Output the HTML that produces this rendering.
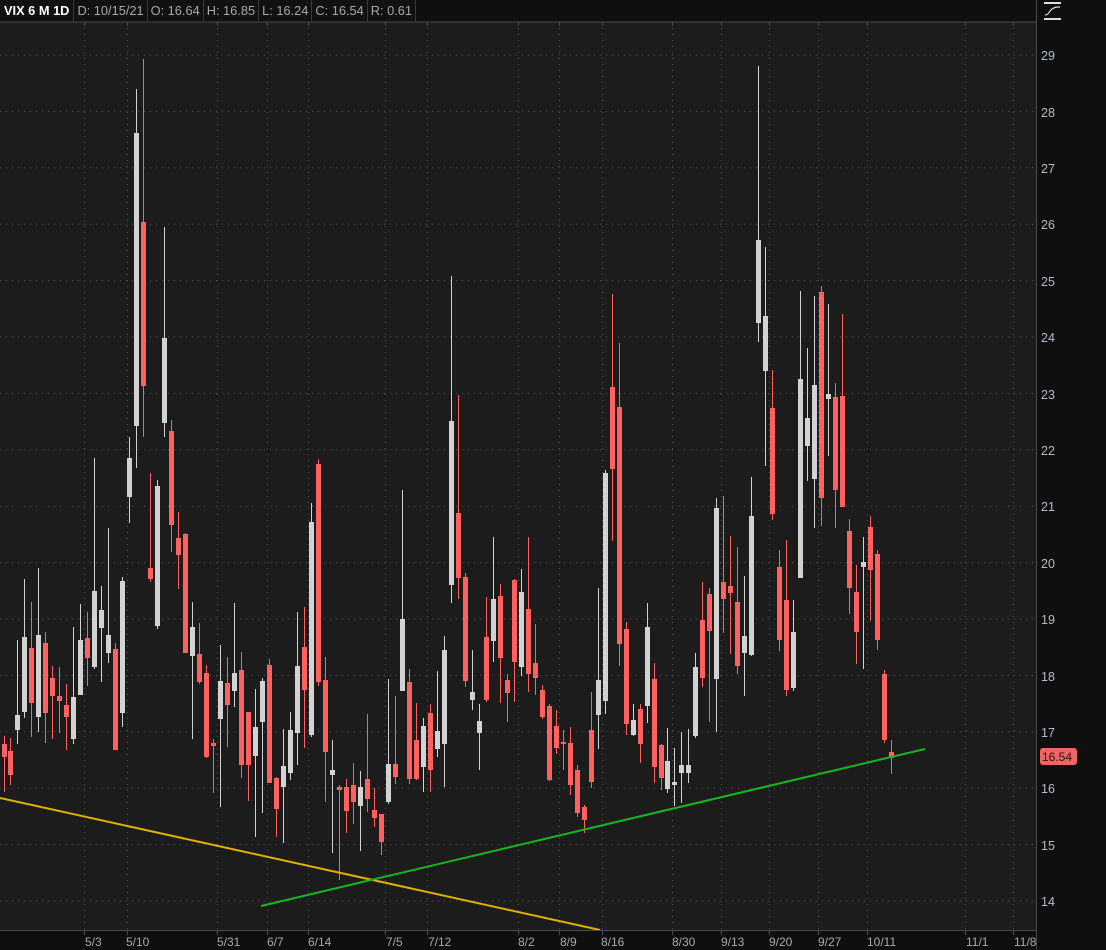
<!DOCTYPE html>
<html><head><meta charset="utf-8"><style>
html,body{margin:0;padding:0;background:#0f0f0f;width:1106px;height:950px;overflow:hidden;font-family:"Liberation Sans",sans-serif}
#hdr{position:absolute;left:0;top:0;height:21px;display:flex;font-size:12.8px;color:#a8a8a8}
#hdr div{border-right:1px solid #3a3a3a;padding:0 3px;line-height:22px;height:21px;background:#111}
#hdr .b{color:#fff;font-weight:bold;padding:0 4px}
</style></head><body>
<svg id="s" width="1106" height="950" style="position:absolute;left:0;top:0" xmlns="http://www.w3.org/2000/svg">
<rect x="0" y="0" width="1106" height="950" fill="#0f0f0f"/>
<rect x="0" y="22" width="1036" height="908" fill="#1c1c1c"/>
<g id="grid" stroke="#555" stroke-width="1" stroke-dasharray="1,5"></g>
<g id="candles"></g>
<line x1="0" y1="798" x2="600" y2="930" stroke="#e0b000" stroke-width="2"/>
<line x1="261" y1="906" x2="925" y2="749" stroke="#18b423" stroke-width="2"/>
<line x1="0" y1="22" x2="1036" y2="22" stroke="#4a4a4a"/>
<line x1="1036.5" y1="0" x2="1036.5" y2="950" stroke="#4a4a4a"/>
<line x1="0" y1="930.5" x2="1036" y2="930.5" stroke="#4a4a4a"/>
<g id="ticks" stroke="#4a4a4a"></g>
<g font-family="Liberation Sans, sans-serif" font-size="12.5" fill="#b4bcc8">
<text x="1041" y="60">29</text><text x="1041" y="117">28</text><text x="1041" y="173">27</text><text x="1041" y="229">26</text><text x="1041" y="286">25</text><text x="1041" y="342">24</text><text x="1041" y="399">23</text><text x="1041" y="455">22</text><text x="1041" y="511">21</text><text x="1041" y="568">20</text><text x="1041" y="624">19</text><text x="1041" y="681">18</text><text x="1041" y="737">17</text><text x="1041" y="793">16</text><text x="1041" y="850">15</text><text x="1041" y="906">14</text>
</g>
<rect x="1040" y="748" width="37" height="17" rx="3" fill="#f06464"/>
<text x="1042" y="761" font-family="Liberation Sans, sans-serif" font-size="12" fill="#1a1a1a">16.54</text>
<g font-family="Liberation Sans, sans-serif" font-size="12" fill="#a8a8a8">
<text x="85" y="946">5/3</text><text x="126" y="946">5/10</text><text x="217" y="946">5/31</text><text x="267" y="946">6/7</text><text x="308" y="946">6/14</text><text x="386" y="946">7/5</text><text x="428" y="946">7/12</text><text x="518" y="946">8/2</text><text x="560" y="946">8/9</text><text x="601" y="946">8/16</text><text x="672" y="946">8/30</text><text x="721" y="946">9/13</text><text x="769" y="946">9/20</text><text x="818" y="946">9/27</text><text x="867" y="946">10/11</text><text x="966" y="946">11/1</text><text x="1014" y="946">11/8</text>
</g>
<g stroke="#ddd" fill="none">
<rect x="1044" y="2" width="17" height="2" fill="#ddd" stroke="none"/>
<rect x="1044" y="18" width="17" height="2" fill="#ddd" stroke="none"/>
<path d="M1045 15 C1049 15 1049 11 1052 9 C1055 7 1056 7 1060 7" stroke-width="1.2"/>
</g>
</svg>
<div id="hdr"><div class="b">VIX 6 M 1D</div><div>D: 10/15/21</div><div>O: 16.64</div><div>H: 16.85</div><div>L: 16.24</div><div>C: 16.54</div><div>R: 0.61</div></div>
<script>
var NS="http://www.w3.org/2000/svg";
function el(p,t,a){var e=document.createElementNS(NS,t);for(var k in a)e.setAttribute(k,a[k]);p.appendChild(e);return e;}
var g=document.getElementById('grid');
for(var p=14;p<=29;p++){var y=901-(p-14)*56.4;el(g,'line',{x1:0,y1:y,x2:1036,y2:y});}
var vx=[84,127,217,267,308,385,427,518,559,602,672,721,769,818,867,965,1013];
var tk=document.getElementById('ticks');
vx.forEach(function(x){el(g,'line',{x1:x+.5,y1:22,x2:x+.5,y2:930});el(tk,'line',{x1:x+.5,y1:931,x2:x+.5,y2:935});el(tk,'line',{x1:x+.5,y1:22,x2:x+.5,y2:26});});
var C=[
[4,736,792,744,757,'r'],[10,738,785,751,775,'r'],[17,640,744,715,730,'w'],[24,579,718,637,712,'w'],[31,602,737,648,703,'r'],[38,568,732,635,717,'w'],[45,632,743,643,713,'r'],[52,666,739,678,696,'r'],[59,667,733,696,701,'r'],[66,684,750,705,717,'r'],[73,627,744,697,739,'w'],[80,604,695,640,695,'w'],[87,612,686,638,658,'r'],[94,458,669,591,667,'w'],[101,586,682,610,628,'w'],[108,528,663,635,653,'w'],[115,643,750,649,750,'r'],[122,577,727,581,713,'w'],[129,437,523,458,497,'w'],[136,89,468,133,426,'w'],[143,59,437,222,386,'r'],[150,473,582,568,579,'r'],[157,480,629,486,626,'w'],[164,227,437,338,423,'w'],[171,420,552,431,525,'r'],[178,512,589,538,555,'r'],[185,533,653,534,653,'r'],[192,602,739,627,656,'w'],[199,623,684,654,682,'r'],[206,665,758,673,757,'r'],[213,739,793,743,746,'r'],[220,645,807,681,719,'w'],[227,657,747,683,705,'r'],[234,603,707,673,691,'w'],[241,652,778,670,765,'r'],[248,712,801,712,765,'r'],[255,689,837,727,756,'w'],[262,678,813,681,722,'w'],[269,659,783,665,783,'r'],[276,777,837,778,809,'r'],[283,729,843,766,787,'w'],[290,712,780,730,773,'w'],[297,612,765,666,733,'w'],[304,607,748,647,690,'r'],[311,503,737,522,735,'w'],[318,459,686,464,682,'r'],[325,657,802,680,752,'r'],[332,740,853,770,775,'w'],[339,785,880,787,790,'r'],[346,779,833,787,811,'r'],[353,763,824,785,802,'r'],[360,771,851,787,806,'w'],[367,714,812,779,799,'r'],[374,788,827,810,818,'r'],[381,814,855,814,842,'r'],[388,679,804,764,802,'w'],[395,696,784,764,777,'r'],[402,490,691,619,691,'w'],[409,669,784,682,779,'r'],[416,703,780,740,779,'r'],[423,718,792,726,767,'w'],[430,704,792,713,770,'r'],[437,671,757,731,749,'w'],[444,636,787,650,744,'w'],[451,276,603,421,585,'w'],[458,395,599,513,578,'r'],[465,573,687,577,681,'r'],[472,650,710,692,700,'w'],[479,704,770,721,733,'w'],[486,597,702,637,700,'r'],[493,537,662,599,641,'w'],[500,584,703,596,658,'r'],[507,674,722,680,693,'r'],[514,579,702,580,662,'r'],[521,569,676,592,667,'w'],[528,537,692,609,674,'r'],[535,624,695,663,678,'r'],[542,685,719,690,717,'r'],[549,704,781,706,780,'r'],[556,710,754,726,748,'r'],[563,730,770,742,744,'r'],[570,727,795,743,785,'r'],[577,765,817,770,813,'r'],[584,805,833,807,820,'r'],[591,692,788,730,782,'r'],[598,588,749,680,715,'w'],[605,470,714,473,701,'w'],[612,294,541,387,469,'r'],[619,343,666,407,644,'r'],[626,622,735,629,724,'r'],[633,704,736,720,735,'w'],[640,704,763,709,744,'r'],[647,603,723,627,706,'w'],[654,663,783,679,767,'r'],[661,744,790,745,778,'r'],[667,728,793,761,789,'w'],[674,748,806,782,785,'w'],[681,732,803,765,773,'w'],[688,729,783,765,773,'w'],[695,653,738,667,736,'w'],[702,582,687,620,678,'r'],[709,588,722,594,631,'r'],[716,498,732,508,679,'w'],[723,496,633,582,599,'r'],[730,536,654,586,593,'r'],[737,547,674,602,666,'r'],[744,576,696,636,653,'w'],[751,477,656,516,655,'w'],[758,66,342,240,323,'w'],[765,247,466,316,371,'w'],[772,370,520,408,514,'r'],[779,550,651,567,640,'r'],[786,540,696,600,690,'r'],[793,600,691,632,688,'w'],[800,291,578,379,578,'w'],[807,348,481,418,446,'w'],[814,296,528,385,479,'w'],[821,286,526,292,498,'r'],[828,304,456,394,399,'w'],[835,383,528,397,490,'r'],[842,314,507,396,507,'r'],[849,519,614,531,588,'r'],[856,565,664,592,632,'r'],[863,537,669,562,567,'w'],[870,516,621,527,570,'r'],[877,550,650,554,640,'r'],[884,670,743,674,740,'r'],[891,740,774,752,758,'r']];
var cg=document.getElementById('candles');
C.forEach(function(c){var col=c[5]=='r'?'#ff6060':'#d2d2d2';
el(cg,'rect',{x:c[0],y:c[1],width:1,height:c[2]-c[1],fill:col});
var h=Math.max(2,c[4]-c[3]);el(cg,'rect',{x:c[0]-2,y:c[3],width:5,height:h,fill:col});});
</script>
</body></html>
